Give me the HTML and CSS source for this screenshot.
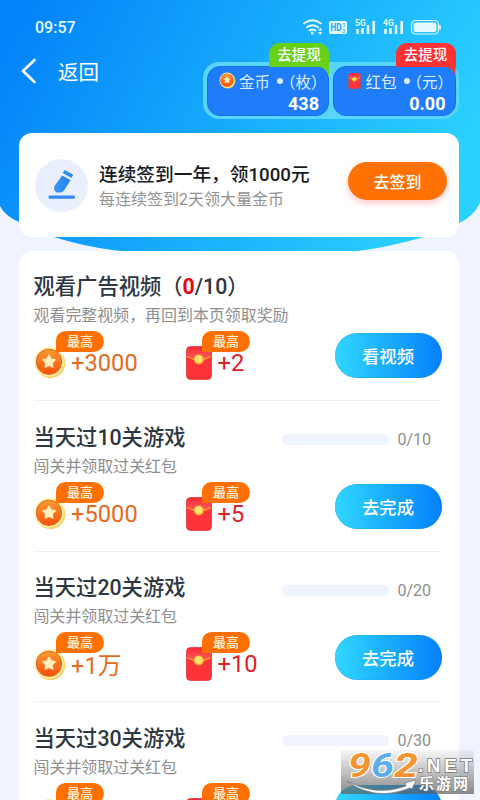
FILE: index.html
```html
<!DOCTYPE html>
<html lang="zh-CN">
<head>
<meta charset="utf-8">
<title>返回</title>
<link rel="stylesheet" href="styles.css">
</head>
<body>
<svg class="defs" width="0" height="0">
  <defs>
    <linearGradient id="sky" gradientUnits="userSpaceOnUse" x1="0" y1="50" x2="410" y2="270"><stop offset="0" stop-color="#0383f9"/><stop offset="1" stop-color="#2bd2ff"/></linearGradient>
    <linearGradient id="pen" x1="0" y1="0" x2="1" y2="0"><stop offset="0" stop-color="#3a9bfb"/><stop offset="1" stop-color="#1f7ff2"/></linearGradient>
    <linearGradient id="gold" x1="0" y1="0" x2="0" y2="1"><stop offset="0" stop-color="#ff9a32"/><stop offset="1" stop-color="#f8500c"/></linearGradient>
    <linearGradient id="flap" x1="0" y1="0" x2="0" y2="1"><stop offset="0" stop-color="#f42b35"/><stop offset="1" stop-color="#ff5f5f"/></linearGradient>
  </defs>
  <symbol id="coin" viewBox="0 0 32 33">
    <circle cx="16.3" cy="17.2" r="15" fill="#f9d465"/>
    <circle cx="15.2" cy="15.8" r="14.7" fill="#fff0a6"/>
    <circle cx="15" cy="15.8" r="13.1" fill="#d96b20"/>
    <circle cx="15" cy="15.8" r="12.1" fill="url(#gold)"/>
    <path d="M15 9.300l1.900 3.800 4.200.7-3 3 .6 4.200-3.700-1.900-3.700 1.900.6-4.200-3-3 4.200-.7z" fill="#fff0bd" stroke="#fff0bd" stroke-width="1.500" stroke-linejoin="round"/>
  </symbol>
  <symbol id="packet" viewBox="0 0 26 34">
    <rect x=".5" y=".5" width="25" height="33" rx="4" fill="#fc3338" stroke="#e3363c" stroke-width=".8"/>
    <path d="M1 5a4 4 0 014-4h16a4 4 0 014 4v6q-12 6-24 0z" fill="url(#flap)"/>
    <path d="M1 10.500q12 7 24 0" fill="none" stroke="#f7a12d" stroke-width="1.200"/>
    <circle cx="12.800" cy="13.500" r="5" fill="#fdb52e"/><circle cx="12.500" cy="13" r="3.800" fill="#ffe273"/>
  </symbol>
</svg>
<svg class="backdrop" width="480" height="260" viewBox="0 0 480 260"><path fill="url(#sky)" d="M0 0H480V203Q473 217 459 223Q444 231 424 237Q392 246 365 250Q240 268 113 250Q82 246 54 237Q34 230 19 222Q5 216 0 206Z"/></svg>

<div class="screen">
  <header class="status">
    <span class="clock">09:57</span>
    <svg class="signals" width="140" height="20" viewBox="302 17 140 20">
      <g fill="none" stroke="#e3f8ff" stroke-width="2" stroke-linecap="round">
        <path d="M305 23.500q8.500-6.500 17 0M308 27.300q5.500-4.200 11 0M310.700 30.500q2.800-2 5.600 0"/>
      </g>
      <circle cx="313.300" cy="33" r="1.500" fill="#e3f8ff"/>
      <path d="M319 30.500l2.200-3 2.200 3zM319 32l2.200 3 2.200-3z" fill="#e3f8ff"/>
      <rect x="330" y="21" width="18" height="13" rx="2" fill="#e3f8ff"/>
      <text x="331.500" y="31.300" textLength="11" lengthAdjust="spacingAndGlyphs" class="hd">HD</text>
      <text x="343.500" y="27" class="tiny-dark">1</text><text x="343.500" y="33" class="tiny-dark">2</text>
      <text x="356" y="26" class="net">5G</text><text x="384" y="26" class="net">4G</text>
      <path d="M358.500 29v5M363.500 28v6M369 25v9M374.700 21v13M386.500 29v5M391.500 28v6M397 25v9M402.700 21v13" stroke="#e3f8ff" stroke-width="2.600" fill="none"/>
      <rect x="412.500" y="20.500" width="27" height="13.500" rx="4" fill="none" stroke="#e3f8ff" stroke-width="1.200"/>
      <rect x="414.500" y="22.500" width="23" height="9.500" rx="2.200" fill="#e3f8ff"/>
      <path d="M441 25v4.500" stroke="#e3f8ff" stroke-width="1.600"/>
    </svg>
  </header>

  <div class="topbar">
    <div class="back">
      <svg width="16" height="26" viewBox="0 0 16 26"><path d="M13.500 2L2 13l11.500 11" fill="none" stroke="#fff" stroke-width="2.600" stroke-linecap="round" stroke-linejoin="round"/></svg>
      <span>返回</span>
    </div>
    <div class="wallet">
      <div class="purse">
        <span class="cash green">去提现</span>
        <div class="purse-label"><svg width="17" height="17"><use href="#coin"/></svg><span class="unit">金币</span><i class="dot"></i><span class="measure">（枚）</span></div>
        <b>438</b>
      </div>
      <div class="purse">
        <span class="cash red">去提现</span>
        <div class="purse-label"><svg width="17" height="16"><use href="#packet"/></svg><span class="unit">红包</span><i class="dot"></i><span class="measure">（元）</span></div>
        <b>0.00</b>
      </div>
    </div>
  </div>

  <section class="signin">
    <div class="pen">
      <svg width="28" height="32" viewBox="0 0 28 32"><g fill="url(#pen)" stroke="#2d8bf5" stroke-width="1" stroke-linejoin="round"><path d="M14.300 7L22 11.300 15.500 21.500 13 23H8.500L6.800 21V17.500z"/><path d="M16.800 1.500L24.700 6 23.300 8.300 15.500 4z"/></g><rect x=".5" y="26.500" width="26.500" height="3.300" rx="1.400" fill="#348bf3"/></svg>
    </div>
    <div class="signin-text"><h2>连续签到一年，领1000元</h2><p>每连续签到2天领大量金币</p></div>
    <button class="orange">去签到</button>
  </section>

  <main class="tasks">
    <article class="task">
      <h3>观看广告视频（<em>0</em>/10）</h3>
      <p>观看完整视频，再回到本页领取奖励</p>
      <div class="rewards">
        <div class="reward coin"><svg width="32" height="33"><use href="#coin"/></svg><span>+3000</span><i class="max">最高</i></div>
        <div class="reward packet"><svg width="26" height="34"><use href="#packet"/></svg><span>+2</span><i class="max">最高</i></div>
      </div>
      <button class="go">看视频</button>
    </article>
    <article class="task">
      <div class="title"><h3>当天过10关游戏</h3><i class="bar"></i><span class="count">0/10</span></div>
      <p>闯关并领取过关红包</p>
      <div class="rewards">
        <div class="reward coin"><svg width="32" height="33"><use href="#coin"/></svg><span>+5000</span><i class="max">最高</i></div>
        <div class="reward packet"><svg width="26" height="34"><use href="#packet"/></svg><span>+5</span><i class="max">最高</i></div>
      </div>
      <button class="go">去完成</button>
    </article>
    <article class="task">
      <div class="title"><h3>当天过20关游戏</h3><i class="bar"></i><span class="count">0/20</span></div>
      <p>闯关并领取过关红包</p>
      <div class="rewards">
        <div class="reward coin"><svg width="32" height="33"><use href="#coin"/></svg><span>+1万</span><i class="max">最高</i></div>
        <div class="reward packet"><svg width="26" height="34"><use href="#packet"/></svg><span>+10</span><i class="max">最高</i></div>
      </div>
      <button class="go">去完成</button>
    </article>
    <article class="task">
      <div class="title"><h3>当天过30关游戏</h3><i class="bar"></i><span class="count">0/30</span></div>
      <p>闯关并领取过关红包</p>
      <div class="rewards">
        <div class="reward coin"><svg width="32" height="33"><use href="#coin"/></svg><i class="max">最高</i></div>
        <div class="reward packet"><svg width="26" height="34"><use href="#packet"/></svg><i class="max">最高</i></div>
      </div>
      <button class="go">去完成</button>
    </article>
  </main>
</div>

<svg class="watermark" width="133" height="44" viewBox="0 0 133 44">
  <g class="digits"><text x="7" y="27" textLength="23" lengthAdjust="spacingAndGlyphs" fill="#f5942f">9</text><text x="30" y="27" textLength="23" lengthAdjust="spacingAndGlyphs" fill="#5caee8">6</text><text x="53" y="27" textLength="24" lengthAdjust="spacingAndGlyphs" fill="#f5942f">2</text></g>
  <path d="M6 31Q35 47 65 36l-1-3 11-3-4 9-2-1Q34 52 6 31z" fill="#fff" stroke="#777" stroke-width=".7"/>
  <text class="net-name" x="77" y="22" textLength="54" lengthAdjust="spacing">.NET</text>
  <text class="site" x="78" y="39" textLength="49" lengthAdjust="spacing">乐游网</text>
</svg>
</body>
</html>
```

FILE: styles.css
```css
* { box-sizing: border-box; }
html, body { margin: 0; width: 480px; height: 800px; overflow: hidden; }
body { position: relative; background: #f0f4ff; font-family: Roboto, "Noto Sans CJK SC", sans-serif; }
h2, h3, p { margin: 0; font-weight: 500; white-space: nowrap; }
i, em { font-style: normal; }
button { border: 0; padding: 0; font-family: inherit; color: #fff; }
.defs, .backdrop { position: absolute; left: 0; top: 0; }
.screen { position: relative; height: 800px; display: flex; flex-direction: column; padding: 0 21px 0 19px; overflow: hidden; }

.status { height: 55px; flex: none; display: flex; justify-content: space-between; padding: 17px 17px 0 16px; }
.clock { font-size: 16px; line-height: 22px; font-weight: 500; color: #e6f8ff; }
.signals { display: block; margin-right: 1px; }
.hd { font-size: 10px; font-weight: 700; fill: #22a6ee; }
.tiny-dark { font-size: 5px; font-weight: 700; fill: #22a6ee; }
.net { font-size: 8.500px; font-weight: 700; fill: #e3f8ff; }

.topbar { height: 78px; flex: none; display: flex; justify-content: space-between; }
.back { display: flex; align-items: center; height: 32px; gap: 21px; padding-left: 2px; color: #fff; font-size: 20.500px; }
.wallet { display: flex; gap: 4px; width: 256px; height: 57px; margin: 7px 0 0; padding: 3.500px; border-radius: 16px; background: #58d5fb; }
.purse { position: relative; flex: 1 1 0; min-width: 0; border-radius: 13px; background: #1f7df9; border: 1px solid #1670e2; color: #fff; display: flex; flex-direction: column; align-items: flex-end; }
.cash { position: absolute; right: -1px; top: -24px; width: 60px; height: 24px; border-radius: 11px 11px 0 0; font-size: 14.500px; line-height: 26px; text-align: center; font-weight: 500; color: #fff; }
.cash::after { content: ""; position: absolute; right: 0; top: 24px; width: 12px; height: 11px; background: inherit; clip-path: path("M0 0H12V11Q11 1 0 0Z"); }
.green { background: #68d017; }
.red { background: #fd3235; }
.purse-label { width: 100%; height: 28px; display: flex; align-items: center; padding-left: 11.500px; color: #dceeff; white-space: nowrap; }
.purse-label svg { flex: none; }
.unit { font-size: 15.500px; margin-left: 3px; }
.dot { flex: none; width: 6px; height: 6px; margin-left: 7px; border-radius: 50%; background: #dceeff; }
.measure { font-size: 15.500px; margin-left: -3px; }
.purse b { font-size: 18px; line-height: 18px; margin-right: 9px; }

.signin { height: 104px; flex: none; width: 440px; background: #fff; border-radius: 13px; display: flex; align-items: center; padding: 0 12px 0 16px; }
.pen { width: 53px; height: 53px; border-radius: 50%; background: #e9effc; display: flex; justify-content: center; align-items: center; }
.signin-text { margin-left: 11px; flex: 1; padding-top: 2px; }
.signin-text h2 { font-size: 18.700px; line-height: 26px; color: #171a1e; }
.signin-text p { font-size: 16px; line-height: 23px; color: #929292; font-weight: 400; }
.orange { width: 99px; height: 38px; margin-top: -8px; border-radius: 19px; background: #ff7103; box-shadow: 0 3px 7px rgba(255, 60, 60, .3); font-size: 16px; font-weight: 500; }

.tasks { width: 440px; margin-top: 14px; flex: none; background: #fff; border-radius: 13px; padding: 0 17.500px 0 15px; }
.task { position: relative; height: 150.700px; padding-top: 20.500px; border-bottom: 1px solid #eeeff1; }
.task:first-child { height: 150px; padding-top: 19.500px; }
.task h3 { font-size: 21.300px; line-height: 31px; color: #2d3742; margin-left: -.5px; }
.task h3 em { color: #e50914; font-weight: 700; }
.task p { font-size: 15.950px; line-height: 27px; color: #8e8e8e; font-weight: 400; margin-left: -.5px; }
.title { display: flex; align-items: center; }
.bar { width: 107px; height: 11px; margin-left: auto; border-radius: 6px; background: #f0f4ff; margin-top: 5px; }
.count { width: 44px; margin: 5px 0 0 9px; font-size: 16px; color: #8e8e8e; }
.rewards { display: flex; }
.reward { position: relative; display: flex; align-items: center; height: 53px; padding-top: 15px; font-size: 23.700px; }
.reward svg { flex: none; }
.coin { width: 151.500px; gap: 5px; color: #e66a1e; }
.packet { gap: 6px; color: #db2129; }
.max { position: absolute; top: 2px; height: 21px; width: 48px; border-radius: 10px 11px 11px 0; background: #ff7000; color: #fff4df; font-size: 13px; line-height: 22px; text-align: center; font-weight: 500; }
.coin .max { left: 22px; }
.packet .max { left: 16.500px; }
.go { position: absolute; right: 0; top: 83px; width: 107px; height: 45px; border-radius: 23px; background: linear-gradient(90deg, #30d8ff, #0480fa); box-shadow: inset 0 0 1px #0879d4; font-size: 17.300px; font-weight: 500; }
.task:first-child .go { top: 82.300px; }

.watermark { position: absolute; left: 341px; top: 750px; background: linear-gradient(rgba(120, 120, 120, .06), rgba(95, 95, 95, .72)); }
.digits text { font: italic 700 33px Roboto, sans-serif; stroke: #fff; stroke-width: 2px; paint-order: stroke; }
.net-name { font: 700 19px "Liberation Sans", sans-serif; fill: #fff; stroke: #777; stroke-width: 1.500px; paint-order: stroke; }
.site { font: 700 15px "Noto Sans CJK SC", sans-serif; fill: #fff; stroke: #777; stroke-width: 1px; paint-order: stroke; }
```
